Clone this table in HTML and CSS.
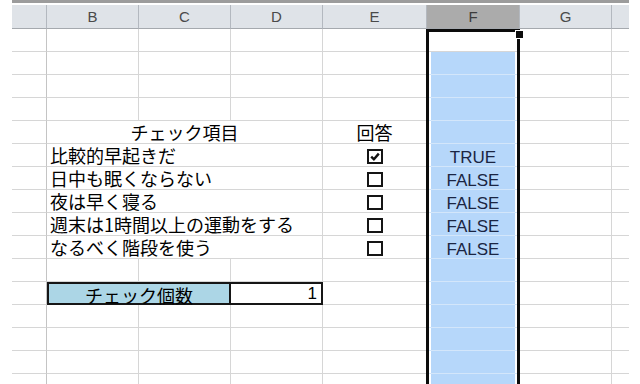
FILE: index.html
```html
<!DOCTYPE html>
<html lang="ja">
<head>
<meta charset="utf-8">
<title>チェックシート</title>
<link rel="stylesheet" href="styles.css">
</head>
<body>
<div class="sheet">
  <div class="topbar"></div>
  <div class="grid">
    <!-- column headers -->
    <div class="hd"></div><div class="hd">B</div><div class="hd">C</div><div class="hd">D</div><div class="hd">E</div><div class="hd hd-sel">F</div><div class="hd">G</div><div class="hd end"></div>

    <!-- row 1 -->
    <div class="rh"></div><div class="c"></div><div class="c"></div><div class="c"></div><div class="c"></div><div class="c f active"></div><div class="c"></div><div class="c end"></div>
    <!-- rows 2-4 -->
    <div class="rh"></div><div class="c"></div><div class="c"></div><div class="c"></div><div class="c"></div><div class="c f"></div><div class="c"></div><div class="c end"></div>
    <div class="rh"></div><div class="c"></div><div class="c"></div><div class="c"></div><div class="c"></div><div class="c f"></div><div class="c"></div><div class="c end"></div>
    <div class="rh"></div><div class="c"></div><div class="c"></div><div class="c"></div><div class="c"></div><div class="c f"></div><div class="c"></div><div class="c end"></div>

    <!-- headings -->
    <div class="rh"></div><div class="c span3 jp center">チェック項目</div><div class="c jp center">回答</div><div class="c f"></div><div class="c"></div><div class="c end"></div>

    <!-- checklist -->
    <div class="rh"></div><div class="c span3 jp">比較的早起きだ</div><div class="c center"><span class="cb"><svg viewBox="0 0 12 11" width="12" height="11"><path d="M2.2 5.6 L4.9 8.3 L9.8 2.6" fill="none" stroke="#111" stroke-width="2.4"/></svg></span></div><div class="c f val">TRUE</div><div class="c"></div><div class="c end"></div>
    <div class="rh"></div><div class="c span3 jp">日中も眠くならない</div><div class="c center"><span class="cb"></span></div><div class="c f val">FALSE</div><div class="c"></div><div class="c end"></div>
    <div class="rh"></div><div class="c span3 jp">夜は早く寝る</div><div class="c center"><span class="cb"></span></div><div class="c f val">FALSE</div><div class="c"></div><div class="c end"></div>
    <div class="rh"></div><div class="c span3 jp">週末は1時間以上の運動をする</div><div class="c center"><span class="cb"></span></div><div class="c f val">FALSE</div><div class="c"></div><div class="c end"></div>
    <div class="rh"></div><div class="c span3 jp">なるべく階段を使う</div><div class="c center"><span class="cb"></span></div><div class="c f val">FALSE</div><div class="c"></div><div class="c end"></div>

    <!-- row 11 -->
    <div class="rh"></div><div class="c"></div><div class="c"></div><div class="c"></div><div class="c"></div><div class="c f"></div><div class="c"></div><div class="c end"></div>

    <!-- count -->
    <div class="rh"></div><div class="c span2 jp center count-label">チェック個数</div><div class="c count-value">1</div><div class="c"></div><div class="c f"></div><div class="c"></div><div class="c end"></div>

    <!-- rows 13-16 -->
    <div class="rh"></div><div class="c"></div><div class="c"></div><div class="c"></div><div class="c"></div><div class="c f"></div><div class="c"></div><div class="c end"></div>
    <div class="rh"></div><div class="c"></div><div class="c"></div><div class="c"></div><div class="c"></div><div class="c f"></div><div class="c"></div><div class="c end"></div>
    <div class="rh"></div><div class="c"></div><div class="c"></div><div class="c"></div><div class="c"></div><div class="c f"></div><div class="c"></div><div class="c end"></div>
    <div class="rh"></div><div class="c"></div><div class="c"></div><div class="c"></div><div class="c"></div><div class="c f"></div><div class="c"></div><div class="c end"></div>
  </div>

  <!-- selected column outline and fill handle -->
  <div class="selection"></div>
  <div class="fill-handle"></div>
</div>
</body>
</html>
```

FILE: styles.css
```css
html, body {
  margin: 0;
  padding: 0;
  background: #fff;
  overflow: hidden;
}

body {
  width: 640px;
  height: 384px;
}

.sheet {
  position: relative;
  margin-left: 12px;
  width: 617px;
  height: 384px;
  overflow: hidden;
}

.topbar {
  height: 3px;
  background: #9c9c9c;
  margin-bottom: 2px;
}

.grid {
  display: grid;
  grid-template-columns: 35px 92px 92px 92px 104px 93px 92px 17px;
  grid-template-rows: 24px;
  grid-auto-rows: 23px;
}

.grid > div {
  box-sizing: border-box;
  min-width: 0;
}

/* column header strip */
.hd {
  background: #dfe3e8;
  border-right: 1px solid #b3b8bf;
  border-bottom: 1px solid #a5a9ae;
  font-family: "Liberation Sans", Arial, sans-serif;
  font-size: 15px;
  color: #4a4a4a;
  text-align: center;
  line-height: 23px;
}

.hd-sel {
  background: #ababab;
  color: #3c3c3c;
}

.hd.end {
  border-right: none;
}

/* row header column (numbers scrolled out of view) */
.rh {
  border-right: 1px solid #c4c4c4;
  border-bottom: 1px solid #d6d6d6;
}

/* ordinary cells */
.c {
  border-right: 1px solid #d6d6d6;
  border-bottom: 1px solid #d6d6d6;
  line-height: 22px;
  padding: 0 3px;
  white-space: nowrap;
  color: #000;
}

.c.end {
  border-right: none;
}

.span3 {
  grid-column: span 3;
}

.span2 {
  grid-column: span 2;
}

.jp {
  font-family: "Noto Sans CJK JP", sans-serif;
  font-size: 18px;
  line-height: 22px;
}

.center {
  text-align: center;
}

/* selected column F */
.f {
  background: #b6d7fa;
  border-bottom-color: #d3e6fa;
  box-shadow: inset 4px 0 0 #fff, inset -4px 0 0 #fff;
}

.f.active {
  background: #fff;
  border-bottom-color: #d6d6d6;
}

.val {
  font-family: "Liberation Sans", Arial, sans-serif;
  font-size: 17px;
  color: #1b2542;
  text-align: center;
  line-height: 19px;
  padding-top: 4px;
}

/* check boxes */
.cb {
  display: inline-block;
  box-sizing: border-box;
  width: 16px;
  height: 15px;
  border: 2px solid #151515;
  background: #fff;
  vertical-align: middle;
  margin-top: 1px;
  position: relative;
}

.cb svg {
  position: absolute;
  left: 0;
  top: 0;
}

/* check counter */
.count-label {
  background: #acd6e6;
  border: 2px solid #161616;
}

.count-value {
  border: 2px solid #161616;
  border-left: none;
  font-family: "Liberation Sans", Arial, sans-serif;
  font-size: 17px;
  text-align: right;
  line-height: 20px;
  padding-right: 4px;
}

.selection {
  position: absolute;
  left: 414px;
  top: 29px;
  width: 94px;
  height: 360px;
  box-sizing: border-box;
  border: 3px solid #0c0c0c;
  pointer-events: none;
}

.fill-handle {
  position: absolute;
  left: 503px;
  top: 30px;
  width: 7px;
  height: 7px;
  background: #0c0c0c;
  border: 1px solid #fff;
}
```
